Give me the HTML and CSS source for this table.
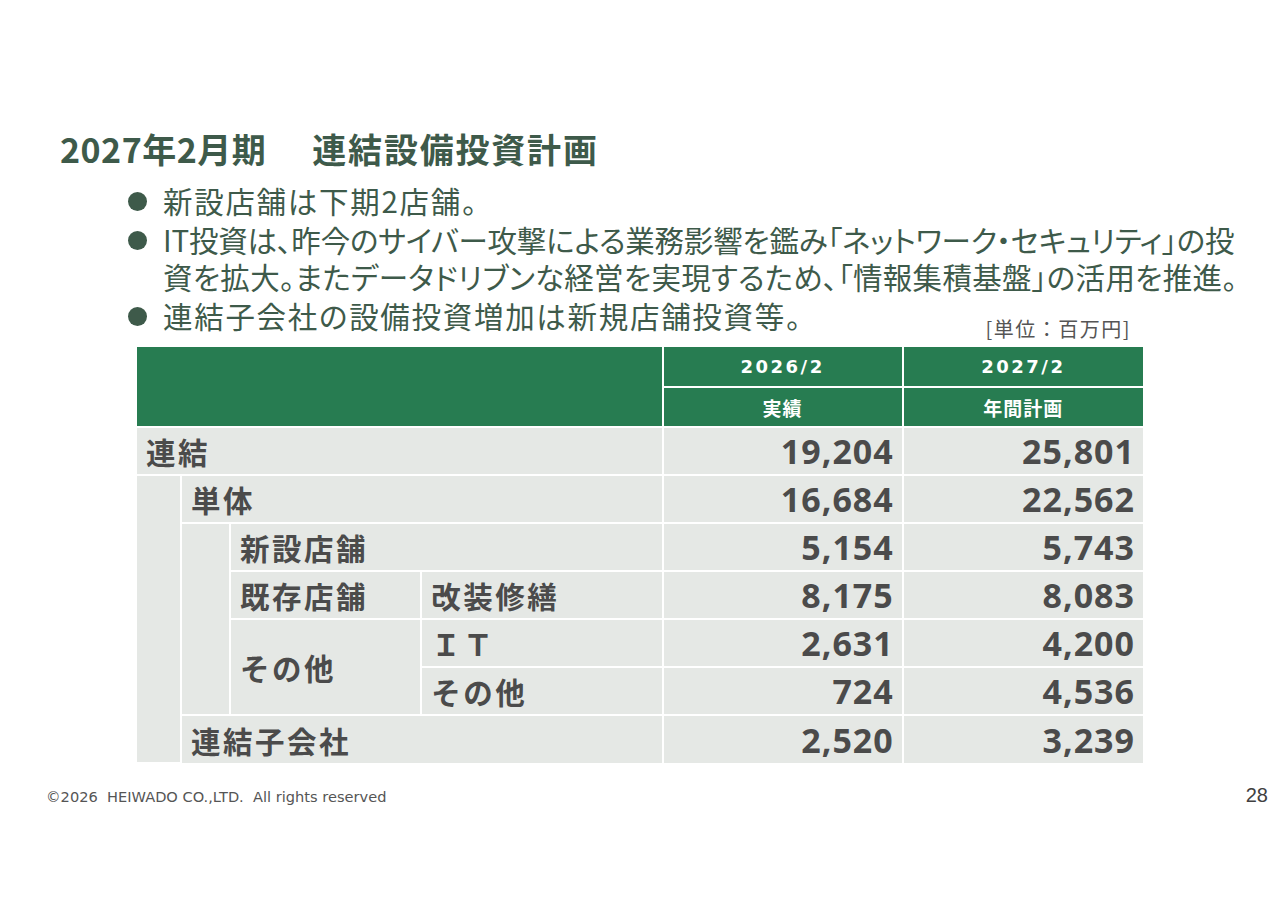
FILE: index.html
```html
<!DOCTYPE html>
<html lang="ja">
<head>
<meta charset="utf-8">
<title>2027年2月期 連結設備投資計画</title>
<link rel="stylesheet" href="styles.css">
</head>
<body>
<div class="slide">
  <h1 class="title"><span>2027年2月期</span><span class="title-main">連結設備投資計画</span></h1>
  <ul class="bullets">
    <li class="wide">新設店舗は下期2店舗。</li>
    <li><span class="first">IT投資は、昨今のサイバー攻撃による業務影響を鑑み「ネットワーク・セキュリティ」の投</span><br><span class="cont">資を拡大。またデータドリブンな経営を実現するため、「情報集積基盤」の活用を推進。</span></li>
    <li class="wide">連結子会社の設備投資増加は新規店舗投資等。</li>
  </ul>
  <div class="unit">[単位：百万円]</div>
  <table class="plan">
    <colgroup>
      <col class="c1"><col class="c2"><col class="c3"><col class="c4"><col class="c5"><col class="c6">
    </colgroup>
    <thead>
      <tr class="hrow">
        <th colspan="4" rowspan="2"></th>
        <th class="year">2026/2</th>
        <th class="year">2027/2</th>
      </tr>
      <tr class="hrow">
        <th class="kind">実績</th>
        <th class="kind">年間計画</th>
      </tr>
    </thead>
    <tbody>
      <tr>
        <td colspan="4" class="lbl l0">連結</td>
        <td class="num">19,204</td>
        <td class="num">25,801</td>
      </tr>
      <tr>
        <td rowspan="6" class="blank"></td>
        <td colspan="3" class="lbl">単体</td>
        <td class="num">16,684</td>
        <td class="num">22,562</td>
      </tr>
      <tr>
        <td rowspan="4" class="blank"></td>
        <td colspan="2" class="lbl">新設店舗</td>
        <td class="num">5,154</td>
        <td class="num">5,743</td>
      </tr>
      <tr>
        <td class="lbl">既存店舗</td>
        <td class="lbl">改装修繕</td>
        <td class="num">8,175</td>
        <td class="num">8,083</td>
      </tr>
      <tr>
        <td rowspan="2" class="lbl">その他</td>
        <td class="lbl">ＩＴ</td>
        <td class="num">2,631</td>
        <td class="num">4,200</td>
      </tr>
      <tr>
        <td class="lbl">その他</td>
        <td class="num">724</td>
        <td class="num">4,536</td>
      </tr>
      <tr>
        <td colspan="3" class="lbl">連結子会社</td>
        <td class="num">2,520</td>
        <td class="num">3,239</td>
      </tr>
    </tbody>
  </table>
  <footer class="footer">
    <span class="copy">©2026&nbsp; HEIWADO CO.,LTD.&nbsp; All rights reserved</span>
    <span class="page">28</span>
  </footer>
</div>
</body>
</html>
```

FILE: styles.css
```css
* { box-sizing: border-box; }
html, body { margin: 0; padding: 0; background: #ffffff; }
body { width: 1280px; height: 905px; overflow: hidden; font-family: "Noto Sans CJK JP", "Noto Sans", sans-serif; }
.slide { width: 1280px; height: 905px; padding-top: 124px; display: flex; flex-direction: column; }

.title {
  margin: 0 0 0 60px;
  font-size: 34px;
  line-height: 50px;
  font-weight: 700;
  color: #3e5a4a;
  letter-spacing: 0.5px;
  white-space: nowrap;
}
.title-main { margin-left: 46px; letter-spacing: 1.8px; }

.bullets {
  list-style: none;
  margin: 8px 0 0 0;
  padding: 0 0 0 163px;
  font-size: 29.5px;
  line-height: 37px;
  color: #3e5a4a;
  font-feature-settings: "palt";
  white-space: nowrap;
}
.bullets li { position: relative; margin-bottom: 2px; }
.bullets li.wide { letter-spacing: 1.7px; }
.bullets .first { letter-spacing: -0.2px; }
.bullets .cont { letter-spacing: 0.3px; }
.bullets li::before {
  content: "";
  position: absolute;
  left: -35px;
  top: 10px;
  width: 19px;
  height: 19px;
  border-radius: 50%;
  background: #3e5a4a;
}

.unit {
  margin: -19px 0 0 0;
  width: 1131px;
  text-align: right;
  font-size: 20px;
  line-height: 24px;
  letter-spacing: 1.5px;
  color: #555555;
}

.plan {
  margin: 6px 0 0 137px;
  width: 1006px;
  border-collapse: collapse;
  table-layout: fixed;
}
.c1 { width: 44px; }
.c2 { width: 49px; }
.c3 { width: 191px; }
.c4 { width: 241px; }
.c5 { width: 240px; }
.c6 { width: 240px; }

.plan th, .plan td { border: 2px solid #ffffff; padding: 0; }
.plan thead th {
  background: #277c51;
  color: #ffffff;
  height: 40px;
  font-weight: 700;
  text-align: center;
  vertical-align: middle;
}
.plan th.year { font-family: "DejaVu Sans", sans-serif; font-size: 18px; letter-spacing: 2.5px; }
.plan th.kind { font-size: 19px; letter-spacing: 1px; }
.plan thead tr:first-child th { border-top: none; }
.plan th:first-child, .plan td:first-child { border-left: none; }
.plan th:last-child, .plan td:last-child { border-right: none; }
.plan tbody tr:last-child td { border-bottom: none; }

.plan tbody td {
  background: #e5e8e5;
  height: 48px;
  color: #4b4b4b;
  font-weight: 700;
  vertical-align: middle;
}
.plan td.lbl {
  font-size: 29.5px;
  letter-spacing: 2.5px;
  padding-left: 9px;
  line-height: 40px;
}
.plan td.num {
  font-family: "Noto Sans", sans-serif;
  font-size: 34px;
  letter-spacing: 1px;
  text-align: right;
  padding-right: 8px;
  line-height: 40px;
}

.footer {
  display: flex;
  justify-content: space-between;
  align-items: baseline;
  margin: 20px 0 0 0;
  padding: 0 12px 0 46px;
  color: #555555;
}
.copy { font-family: "DejaVu Sans", sans-serif; font-size: 14.6px; }
.page { font-family: "Liberation Sans", sans-serif; font-size: 20px; color: #404040; }
```
